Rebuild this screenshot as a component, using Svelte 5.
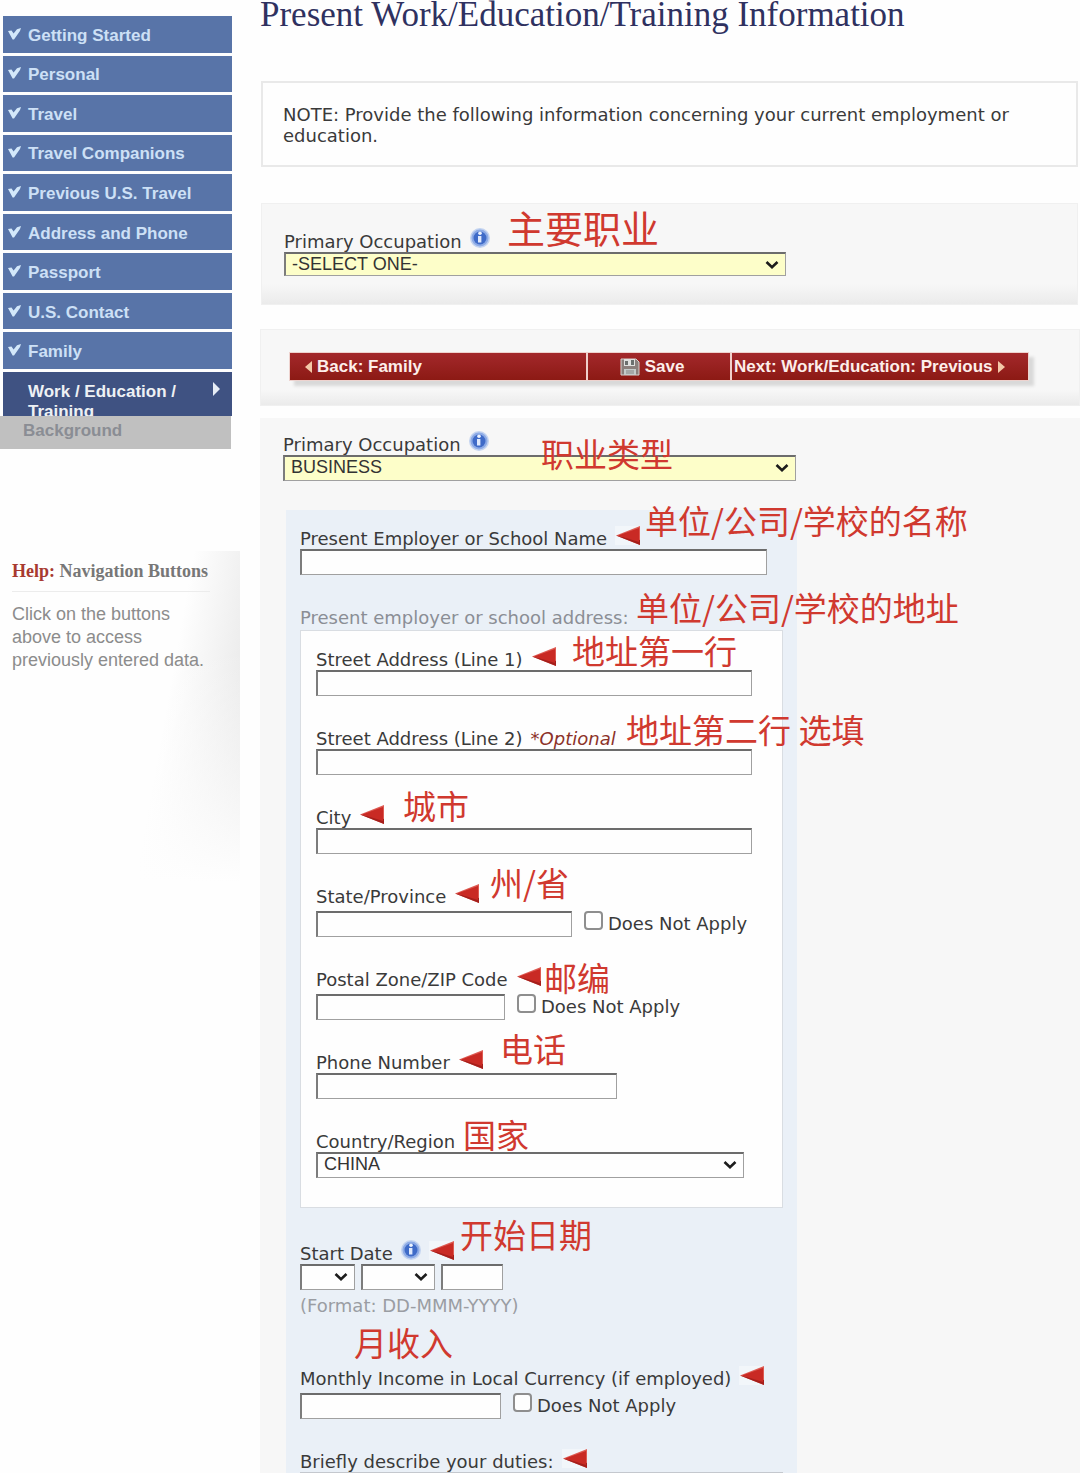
<script lang="ts">
  const steps = [
    "Getting Started",
    "Personal",
    "Travel",
    "Travel Companions",
    "Previous U.S. Travel",
    "Address and Phone",
    "Passport",
    "U.S. Contact",
    "Family",
  ];

  let intro = $state("-SELECT ONE-");
  let occupation = $state("BUSINESS");
  let country = $state("CHINA");
</script>

{#snippet info()}
  <svg class="info" viewBox="0 0 20 20" aria-hidden="true">
    <circle cx="10" cy="10" r="10" fill="#c3d3f0" />
    <circle cx="10" cy="10" r="8.5" fill="#8dabe6" />
    <circle cx="10" cy="10" r="6.5" fill="#3f6bc8" />
    <circle cx="10" cy="5.2" r="1.8" fill="#eef4ff" />
    <path d="M8 8h3.4v6.5H8z" fill="#dfe9fc" />
  </svg>
{/snippet}

{#snippet required()}
  <svg class="required" viewBox="0 0 25 19" aria-hidden="true">
    <rect width="25" height="19" fill="#fff" opacity="0.4" />
    <path d="M1 9.5 25 0V19z" fill="#dd5a52" />
    <path d="M1 9.5 25 14V19z" fill="#a51f1b" />
    <path d="M3 9.5 24 2V16z" fill="#c92a24" />
  </svg>
{/snippet}

{#snippet note(text: string, x: number, y: number)}
  <span class="note" style="left: {x}px; top: {y}px">{text}</span>
{/snippet}

{#snippet chevron()}
  <svg class="chevron" viewBox="0 0 14 10" aria-hidden="true">
    <path d="M1.5 2 7 7.2 12.5 2" fill="none" stroke="#1c1c1c" stroke-width="2.6" />
  </svg>
{/snippet}

{#snippet doesNotApply(id: string)}
  <span class="check">
    <input type="checkbox" {id} />
    <label for={id}>Does Not Apply</label>
  </span>
{/snippet}

<div class="page">
  <aside>
    <nav>
      <ul>
        {#each steps as step}
          <li>
            <a href="#top">
              <svg class="tick" viewBox="0 0 13 12" aria-hidden="true">
                <path d="M0 3 3.5 2.6 5.6 5.6 9 1.2 13 0 12 3 6 11.5 4.6 11.5z" fill="#d3e8fa" />
              </svg>
              {step}
            </a>
          </li>
        {/each}
      </ul>
      <a class="current" href="#work">
        Work / Education / Training
        <svg class="pointer" viewBox="0 0 7 14" aria-hidden="true">
          <path d="M0 0 7 7 0 14z" fill="#e6ecf5" />
        </svg>
      </a>
      <a class="locked" href="#background">Background</a>
    </nav>

    <section class="help">
      <h2><strong>Help:</strong> Navigation Buttons</h2>
      <p>Click on the buttons above to access previously entered data.</p>
    </section>
  </aside>

  <main>
    <h1>Present Work/Education/Training Information</h1>

    <p class="notice">
      NOTE: Provide the following information concerning your current employment or education.
    </p>

    <section class="box intro">
      <div class="field">
        <div class="label"><label for="intro">Primary Occupation</label>{@render info()}</div>
        <div class="select yellow">
          <select id="intro" bind:value={intro}>
            <option>-SELECT ONE-</option>
            <option>BUSINESS</option>
          </select>
          {@render chevron()}
        </div>
        <span class="note large">主要职业</span>
      </div>
    </section>

    <section class="box actions">
      <div class="buttons">
        <button type="button" class="back">
          <svg class="caret" viewBox="0 0 7 12" aria-hidden="true"><path d="M7 0 0 6 7 12z" fill="#f3c9a8" /></svg>
          Back: Family
        </button>
        <button type="button" class="save">
          <svg class="disk" viewBox="0 0 20 18" aria-hidden="true">
            <path d="M1 1h15l3 3v13H1z" fill="#8a7f7c" stroke="#d6d0cc" />
            <path d="M4 1h11v7H4z" fill="#dfe0df" />
            <path d="M5 3h3v4H5zM11 2h3v5h-3z" fill="#6a6f6e" />
            <path d="M4 11h12v6H4z" fill="#c3cbca" />
            <path d="M6 13h8M6 15h8" stroke="#858585" />
          </svg>
          Save
        </button>
        <button type="button" class="next">
          Next: Work/Education: Previous
          <svg class="caret" viewBox="0 0 7 12" aria-hidden="true"><path d="M0 0 7 6 0 12z" fill="#f3c9a8" /></svg>
        </button>
      </div>
    </section>

    <form class="form">
      <div class="field">
        <div class="label"><label for="occupation">Primary Occupation</label>{@render info()}</div>
        <div class="select yellow wide">
          <select id="occupation" bind:value={occupation}>
            <option>BUSINESS</option>
          </select>
          {@render chevron()}
        </div>
        {@render note("职业类型", 258, -3)}
      </div>

      <div class="details">
        <div class="field">
          <div class="label"><label for="employer">Present Employer or School Name</label>{@render required()}</div>
          <input class="employer" id="employer" type="text" />
          {@render note("单位/公司/学校的名称", 345, -30)}
        </div>

        <fieldset>
          <legend>Present employer or school address:</legend>
          {@render note("单位/公司/学校的地址", 336, -45)}
          <div class="address">
            <div class="field">
              <div class="label"><label for="street1">Street Address (Line 1)</label>{@render required()}</div>
              <input class="street" id="street1" type="text" />
              {@render note("地址第一行", 256, -21)}
            </div>
            <div class="field">
              <div class="label">
                <label for="street2">Street Address (Line 2)</label>
                <em>*Optional</em>
              </div>
              <input class="street" id="street2" type="text" />
              {@render note("地址第二行 选填", 310, -21)}
            </div>
            <div class="field">
              <div class="label"><label for="city">City</label>{@render required()}</div>
              <input class="street" id="city" type="text" />
              {@render note("城市", 87, -24)}
            </div>
            <div class="field">
              <div class="label"><label for="state">State/Province</label>{@render required()}</div>
              <div class="inline">
                <input class="state" id="state" type="text" />
                {@render doesNotApply("state-na")}
              </div>
              {@render note("州/省", 174, -26)}
            </div>
            <div class="field">
              <div class="label"><label for="zip">Postal Zone/ZIP Code</label>{@render required()}</div>
              <div class="inline">
                <input class="zip" id="zip" type="text" />
                {@render doesNotApply("zip-na")}
              </div>
              {@render note("邮编", 228, -14)}
            </div>
            <div class="field">
              <div class="label"><label for="phone">Phone Number</label>{@render required()}</div>
              <input class="phone" id="phone" type="tel" />
              {@render note("电话", 184, -26)}
            </div>
            <div class="field">
              <div class="label"><label for="country">Country/Region</label></div>
              <div class="select country">
                <select id="country" bind:value={country}>
                  <option>CHINA</option>
                </select>
                {@render chevron()}
              </div>
              {@render note("国家", 147, -19)}
            </div>
          </div>
        </fieldset>

        <div class="field start">
          <div class="label"><label for="day">Start Date</label>{@render info()}{@render required()}</div>
          <div class="date">
            <div class="select day">
              <select id="day"><option></option></select>
              {@render chevron()}
            </div>
            <div class="select month">
              <select aria-label="Month"><option></option></select>
              {@render chevron()}
            </div>
            <input class="year" type="text" aria-label="Year" />
          </div>
          <p class="format">(Format: DD-MMM-YYYY)</p>
          {@render note("开始日期", 160, -31)}
        </div>

        <div class="field">
          <div class="label"><label for="income">Monthly Income in Local Currency (if employed)</label>{@render required()}</div>
          <div class="inline">
            <input class="income" id="income" type="text" />
            {@render doesNotApply("income-na")}
          </div>
          {@render note("月收入", 54, -48)}
        </div>

        <div class="field">
          <div class="label"><label for="duties">Briefly describe your duties:</label>{@render required()}</div>
          <textarea id="duties" rows="5"></textarea>
        </div>
      </div>
    </form>
  </main>
</div>

<style>
  :global(body) {
    background: #fefefe;
  }

  .page {
    display: flex;
    gap: 20px;
    height: 100vh;
    overflow-x: hidden;
    overflow-y: auto;
    scrollbar-width: none;
    color: #3a3a3a;
    font: 18px/21px "DejaVu Sans", Verdana, sans-serif;
  }

  * {
    box-sizing: border-box;
  }

  h1,
  h2,
  p,
  ul,
  fieldset,
  legend {
    margin: 0;
    padding: 0;
    border: 0;
  }

  aside {
    flex: 0 0 240px;
    padding-top: 16px;
    font-family: "Liberation Sans", Arial, sans-serif;
  }

  nav a {
    display: flex;
    color: #cde0f6;
    font-weight: bold;
    font-size: 17px;
    line-height: 20px;
    text-decoration: none;
  }

  ul {
    display: grid;
    grid-auto-rows: 1fr;
    gap: 3px;
    height: 353px;
    margin: 0 8px 3px 3px;
    list-style: none;
  }

  li a {
    align-items: center;
    gap: 7px;
    height: 100%;
    padding: 3px 0 0 5px;
    background: #5874a8;
  }

  .tick {
    width: 13px;
    height: 12px;
    margin-bottom: 4px;
  }

  nav .current {
    justify-content: space-between;
    height: 44px;
    margin: 0 8px 0 3px;
    padding: 10px 12px 0 25px;
    overflow: hidden;
    background: #3f5282;
    color: #eef1f4;
  }

  .pointer {
    flex: none;
    width: 7px;
    height: 14px;
  }

  nav .locked {
    margin-right: 9px;
    padding: 5px 23px 8px;
    background: #c0c0c0;
    color: #8a8d94;
  }

  .help {
    margin-top: 102px;
    padding: 10px 30px 210px 12px;
    background:
      linear-gradient(to bottom, rgba(254, 254, 254, 0) 30%, #fefefe),
      linear-gradient(100deg, #fefefe 65%, #e2e2e2);
    color: #8c8c8c;
  }

  h2 {
    padding-bottom: 10px;
    border-bottom: 1px solid #ececec;
    color: #777;
    font: bold 18px/20px "Liberation Serif", "Times New Roman", serif;
    white-space: nowrap;
  }

  h2 strong {
    color: #a83a30;
  }

  .help p {
    padding-top: 11px;
    line-height: 23px;
  }

  main {
    flex: 1;
    min-width: 0;
  }

  h1 {
    padding-bottom: 51px;
    color: #2f3160;
    font: 35px/30px "Liberation Serif", "Times New Roman", serif;
  }

  .notice {
    margin: 0 2px 36px 1px;
    padding: 21px 40px 19px 20px;
    border: 2px solid #e9e9e9;
  }

  .box {
    border: 1px solid #f0f0f0;
    background: linear-gradient(#f7f7f7 80%, #ebebeb);
  }

  .intro {
    margin: 0 2px 24px 1px;
    padding: 27px 22px 28px;
  }

  .actions {
    margin-bottom: 12px;
    padding: 22px 50px 24px 28px;
  }

  .buttons {
    display: grid;
    grid-template-columns: 25fr 12fr 25fr;
    gap: 2px;
    max-width: 740px;
    border: 1px solid #eed3cf;
    background: #f0cfcb;
    box-shadow: 5px 5px 3px #d9d9d9;
  }

  button {
    display: flex;
    align-items: center;
    gap: 5px;
    height: 27px;
    padding: 0 2px;
    border: 0;
    background: linear-gradient(#a3282b, #8c1a14);
    color: #fdeeea;
    font: bold 17px/20px "Liberation Sans", Arial, sans-serif;
    white-space: nowrap;
  }

  .back {
    padding-left: 15px;
  }

  .save {
    justify-content: center;
    padding-right: 16px;
  }

  .caret {
    width: 7px;
    height: 12px;
  }

  .disk {
    width: 20px;
    height: 18px;
  }

  .form {
    min-height: 100vh;
    padding: 16px 23px 0;
    background: #f7f7f7;
  }

  .field,
  fieldset {
    position: relative;
  }

  .label {
    display: flex;
    align-items: center;
    gap: 8px;
    height: 21px;
    white-space: nowrap;
  }

  em {
    color: #8c3229;
  }

  .info {
    width: 20px;
    height: 20px;
    margin-bottom: 8px;
  }

  .required {
    width: 25px;
    height: 19px;
    margin-bottom: 7px;
  }

  .note {
    position: absolute;
    z-index: 1;
    color: #d0392f;
    font: 33px/44px "Noto Sans CJK SC", sans-serif;
    white-space: nowrap;
    pointer-events: none;
  }

  .large {
    top: -26px;
    left: 223px;
    font-size: 38px;
  }

  input,
  select,
  textarea {
    display: block;
    width: 100%;
    height: 26px;
    margin: 0;
    padding: 0 6px 3px;
    border: 1px solid #a0a0a0;
    border-top: 2px solid #6c6c6c;
    border-left: 2px solid #7c7c7c;
    border-radius: 0;
    background: #fefefe;
    color: #333;
    font: 18px/20px "Liberation Sans", Arial, sans-serif;
  }

  select {
    appearance: none;
  }

  .select {
    position: relative;
    width: 502px;
    max-width: 100%;
  }

  .yellow select {
    background: #fdfec9;
  }

  .intro select {
    height: 24px;
  }

  .chevron {
    position: absolute;
    top: 8px;
    right: 7px;
    width: 14px;
    height: 10px;
    pointer-events: none;
  }

  .wide {
    width: 513px;
  }

  .details {
    display: flex;
    flex-direction: column;
    gap: 32px;
    width: 511px;
    max-width: 100%;
    margin: 29px 0 0 3px;
    padding: 18px 14px 32px;
    background: #eaf0f7;
  }

  legend {
    height: 23px;
    color: #8b8e95;
  }

  .address {
    display: flex;
    flex-direction: column;
    gap: 32px;
    padding: 18px 15px 29px;
    border: 1px solid #d9dde2;
    background: #fefefe;
  }

  .employer {
    width: 467px;
  }

  .street {
    width: 436px;
  }

  .state {
    width: 256px;
  }

  .zip {
    width: 189px;
  }

  .phone {
    width: 301px;
  }

  .country {
    width: 428px;
  }

  .income {
    width: 201px;
  }

  .inline {
    display: flex;
    gap: 12px;
    padding-top: 4px;
  }

  .check {
    display: flex;
    gap: 5px;
    line-height: 26px;
    white-space: nowrap;
  }

  input[type="checkbox"] {
    appearance: none;
    width: 19px;
    height: 19px;
    padding: 0;
    border: 2px solid #8e8e8e;
    border-radius: 4px;
  }

  .start {
    margin: 3px 0 20px;
  }

  .date {
    display: flex;
    gap: 6px;
  }

  .day {
    width: 55px;
  }

  .month {
    width: 74px;
  }

  .year {
    width: 62px;
  }

  .format {
    padding-top: 5px;
    color: #9a9da3;
  }

  textarea {
    height: auto;
    border-color: #c4c8ce;
  }
</style>
